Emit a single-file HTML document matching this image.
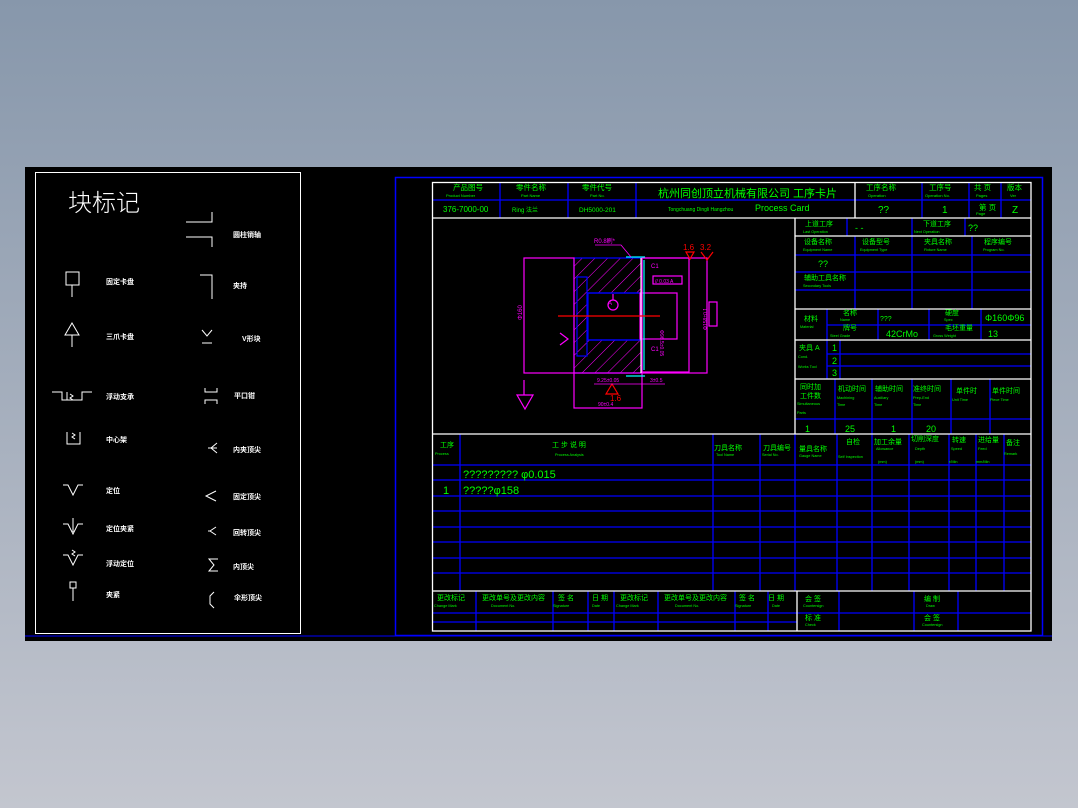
<!DOCTYPE html>
<html><head><meta charset="utf-8"><style>
html,body{margin:0;padding:0;width:1078px;height:808px;overflow:hidden}
svg{display:block}
text{font-family:"Liberation Sans","Noto Sans CJK SC",sans-serif}
</style></head><body>
<svg width="1078" height="808" viewBox="0 0 1078 808" xmlns="http://www.w3.org/2000/svg">
<defs>
<linearGradient id="bg" x1="0" y1="0" x2="0" y2="1">
<stop offset="0" stop-color="#8797ab"/><stop offset="1" stop-color="#c3c6cf"/>
</linearGradient>
<pattern id="hatch" width="9" height="9" patternUnits="userSpaceOnUse" patternTransform="rotate(45)">
<line x1="0" y1="0" x2="0" y2="9" stroke="#ff00ff" stroke-width="1"/>
</pattern>
</defs>
<rect width="1078" height="808" fill="url(#bg)"/>
<rect x="25" y="167" width="1027" height="474" fill="#000"/>

<!-- left panel -->
<rect x="35.5" y="172.5" width="265" height="461" fill="none" stroke="#fff" stroke-width="1"/>
<text x="68" y="211" fill="#fff" font-size="24" font-family="'Noto Sans CJK SC',sans-serif" font-weight="300">块标记</text>
<g stroke="#fff" stroke-width="1" fill="none">
<path d="M186 222h26v-10M186 237h26v10"/>
<path d="M200 275h12v24"/>
<rect x="66" y="272" width="13" height="13"/><path d="M72 285v12"/>
<path d="M72 323l-7 12h14z M72 335v12"/>
<path d="M52 392h10v8h20v-8h10 M67 392v8 M70 394l3 2-3 2 3 2"/>
<path d="M67 432v12h13v-12 M72 433l3 2-3 2 3 2"/>
<path d="M63 485h5l5 10 5-10h5"/>
<path d="M63 524h5l5 10 5-10h5 M73 518v14"/>
<path d="M63 555h5l5 10 5-10h5 M72 550l3 2-3 2 3 2"/>
<rect x="70" y="582" width="6" height="6"/><path d="M73 588v13"/>
<path d="M202 330l5 6 5-6 M202 343h10"/>
<path d="M205 388v4h12v-4 M205 404v-4h12v4"/>
<path d="M217 443l-6 5 6 5 M211 448h-3 M217 448h-6"/>
<path d="M216 491l-10 5 10 5"/>
<path d="M216 527l-6 4 6 4 M210 531h-2"/>
<path d="M218 559h-9l5 6-5 6h9"/>
<path d="M214 592l-4 4v8l4 4"/>
</g>
<g fill="#fff" font-size="7" font-weight="bold">
<text x="233" y="237">圆柱销轴</text><text x="233" y="288">夹持</text><text x="242" y="341">V形块</text>
<text x="234" y="398">平口钳</text><text x="233" y="452">内夹顶尖</text><text x="233" y="499">固定顶尖</text>
<text x="233" y="535">回转顶尖</text><text x="233" y="569">内顶尖</text><text x="234" y="600">伞形顶尖</text>
<text x="106" y="284">固定卡盘</text><text x="106" y="339">三爪卡盘</text><text x="106" y="399">浮动支承</text>
<text x="106" y="442">中心架</text><text x="106" y="493">定位</text><text x="106" y="531">定位夹紧</text>
<text x="106" y="566">浮动定位</text><text x="106" y="597">夹紧</text>
</g>

<!-- right frame -->
<rect x="395.5" y="177.5" width="647" height="458" fill="none" stroke="#0000ff" stroke-width="1.5"/>
<line x1="25" y1="636" x2="1052" y2="636" stroke="#0000ff" stroke-width="1"/>

<!-- blue grid lines -->
<g stroke="#0000ff" stroke-width="1.3">
<line x1="432" y1="200" x2="855" y2="200"/><line x1="855" y1="200" x2="1031" y2="200"/>
<line x1="500" y1="182" x2="500" y2="218"/><line x1="568" y1="182" x2="568" y2="218"/><line x1="636" y1="182" x2="636" y2="218"/>
<line x1="922" y1="182" x2="922" y2="218"/><line x1="969" y1="182" x2="969" y2="218"/><line x1="1001" y1="182" x2="1001" y2="218"/>
<line x1="847" y1="218" x2="847" y2="236"/><line x1="912" y1="218" x2="912" y2="236"/><line x1="965" y1="218" x2="965" y2="236"/>
<line x1="795" y1="255" x2="1031" y2="255"/><line x1="795" y1="272" x2="1031" y2="272"/><line x1="795" y1="290" x2="1031" y2="290"/>
<line x1="855" y1="236" x2="855" y2="309"/><line x1="912" y1="236" x2="912" y2="309"/><line x1="972" y1="236" x2="972" y2="309"/>
<line x1="827" y1="325" x2="1031" y2="325"/>
<line x1="827" y1="309" x2="827" y2="340"/><line x1="878" y1="309" x2="878" y2="340"/><line x1="929" y1="309" x2="929" y2="340"/><line x1="981" y1="309" x2="981" y2="340"/>
<line x1="827" y1="340" x2="827" y2="379"/><line x1="840" y1="340" x2="840" y2="379"/>
<line x1="827" y1="354" x2="1031" y2="354"/><line x1="827" y1="366" x2="1031" y2="366"/>
<line x1="795" y1="419" x2="1031" y2="419"/>
<line x1="835" y1="379" x2="835" y2="434"/><line x1="872" y1="379" x2="872" y2="434"/><line x1="912" y1="379" x2="912" y2="434"/><line x1="951" y1="379" x2="951" y2="434"/><line x1="990" y1="379" x2="990" y2="434"/>
<line x1="460" y1="434" x2="460" y2="591"/><line x1="713" y1="434" x2="713" y2="591"/><line x1="760" y1="434" x2="760" y2="591"/><line x1="795" y1="434" x2="795" y2="591"/>
<line x1="837" y1="434" x2="837" y2="591"/><line x1="872" y1="434" x2="872" y2="591"/><line x1="909" y1="434" x2="909" y2="591"/><line x1="949" y1="434" x2="949" y2="591"/><line x1="976" y1="434" x2="976" y2="591"/><line x1="1004" y1="434" x2="1004" y2="591"/>
<line x1="432" y1="465" x2="1031" y2="465"/><line x1="432" y1="480" x2="1031" y2="480"/><line x1="432" y1="496" x2="1031" y2="496"/>
<line x1="432" y1="511" x2="1031" y2="511"/><line x1="432" y1="527" x2="1031" y2="527"/><line x1="432" y1="542" x2="1031" y2="542"/>
<line x1="432" y1="558" x2="1031" y2="558"/><line x1="432" y1="573" x2="1031" y2="573"/>
<line x1="476" y1="591" x2="476" y2="631"/><line x1="553" y1="591" x2="553" y2="631"/><line x1="588" y1="591" x2="588" y2="631"/><line x1="614" y1="591" x2="614" y2="631"/>
<line x1="658" y1="591" x2="658" y2="631"/><line x1="735" y1="591" x2="735" y2="631"/><line x1="768" y1="591" x2="768" y2="631"/>
<line x1="839" y1="591" x2="839" y2="631"/><line x1="914" y1="591" x2="914" y2="631"/><line x1="958" y1="591" x2="958" y2="631"/>
<line x1="432" y1="613" x2="1031" y2="613"/><line x1="432" y1="622" x2="797" y2="622"/>
</g>
<!-- white lines -->
<g stroke="#fff" stroke-width="1.3" fill="none">
<rect x="432.5" y="182.5" width="598.5" height="448.5"/>
<line x1="855" y1="182" x2="855" y2="218"/>
<line x1="432" y1="218" x2="1031" y2="218"/>
<line x1="795" y1="218" x2="795" y2="434"/>
<line x1="795" y1="236" x2="1031" y2="236"/><line x1="795" y1="309" x2="1031" y2="309"/>
<line x1="795" y1="340" x2="1031" y2="340"/><line x1="795" y1="379" x2="1031" y2="379"/>
<line x1="432" y1="434" x2="1031" y2="434"/><line x1="432" y1="591" x2="1031" y2="591"/>
<line x1="797" y1="591" x2="797" y2="631"/>
</g>

<!-- text green -->
<g fill="#00ff00">
<g font-size="7.5">
<text x="453" y="190">产品图号</text><text x="516" y="190">零件名称</text><text x="582" y="190">零件代号</text>
<text x="866" y="190">工序名称</text><text x="929" y="190">工序号</text><text x="974" y="190">共 页</text><text x="1007" y="190">版本</text>
<text x="979" y="210">第 页</text>
</g>
<g font-size="4">
<text x="446" y="197">Product Number</text><text x="521" y="197">Part Name</text><text x="590" y="197">Part No.</text>
<text x="868" y="197">Operation</text><text x="925" y="197">Operation No.</text><text x="976" y="197">Pages</text><text x="1010" y="197">Ver</text>
<text x="976" y="215">Page</text>
</g>
<text x="443" y="212" font-size="8">376-7000-00</text>
<text x="512" y="212" font-size="6">Ring 法兰</text>
<text x="579" y="212" font-size="6.5">DH5000-201</text>
<text x="658" y="197" font-size="11">杭州同创顶立机械有限公司 工序卡片</text>
<text x="668" y="211" font-size="5">Tongchuang Dingli Hangzhou</text>
<text x="755" y="211" font-size="9">Process Card</text>
<text x="878" y="213" font-size="10">??</text><text x="942" y="213" font-size="10">1</text><text x="1012" y="213" font-size="10">Z</text>
<g font-size="7">
<text x="805" y="226">上道工序</text><text x="923" y="226">下道工序</text>
<text x="804" y="244">设备名称</text><text x="862" y="244">设备型号</text><text x="924" y="244">夹具名称</text><text x="984" y="244">程序编号</text>
<text x="804" y="280">辅助工具名称</text>
<text x="804" y="321">材料</text><text x="843" y="315">名称</text><text x="945" y="315">硬度</text><text x="843" y="330">牌号</text><text x="945" y="330">毛坯重量</text>
<text x="799" y="350">夹具 A</text>
<text x="800" y="389">同时加</text><text x="800" y="398">工件数</text>
<text x="838" y="391">机动时间</text><text x="875" y="391">辅助时间</text><text x="913" y="391">准终时间</text><text x="956" y="393">单件时</text><text x="992" y="393">单件时间</text>
<text x="440" y="447">工序</text><text x="552" y="447">工 步 说 明</text>
<text x="714" y="450">刀具名称</text><text x="763" y="450">刀具编号</text><text x="799" y="451">量具名称</text>
<text x="846" y="444">自检</text><text x="874" y="444">加工余量</text><text x="911" y="441">切削深度</text><text x="952" y="442">转速</text><text x="978" y="442">进给量</text><text x="1006" y="445">备注</text>
<text x="437" y="600">更改标记</text><text x="482" y="600">更改单号及更改内容</text><text x="558" y="600">签 名</text><text x="592" y="600">日 期</text>
<text x="620" y="600">更改标记</text><text x="664" y="600">更改单号及更改内容</text><text x="739" y="600">签 名</text><text x="768" y="600">日 期</text>
<text x="805" y="601">会 签</text><text x="805" y="620">标 准</text><text x="924" y="601">编 制</text><text x="924" y="620">会 签</text>
</g>
<g font-size="3.8">
<text x="803" y="233">Last Operation</text><text x="914" y="233">Next Operation</text>
<text x="803" y="251">Equipment Name</text><text x="860" y="251">Equipment Type</text><text x="924" y="251">Fixture Name</text><text x="983" y="251">Program No.</text>
<text x="803" y="287">Secondary Tools</text>
<text x="800" y="328">Material</text><text x="840" y="321">Name</text><text x="944" y="321">Spec</text><text x="830" y="337">Steel Grade</text><text x="933" y="337">Gross Weight</text>
<text x="798" y="358">Cond.</text><text x="798" y="368">Works Tool</text>
<text x="797" y="405">Simultaneous</text><text x="797" y="414">Parts</text>
<text x="837" y="399">Machining</text><text x="837" y="406">Time</text><text x="874" y="399">Auxiliary</text><text x="874" y="406">Time</text><text x="913" y="399">Prep-End</text><text x="913" y="406">Time</text>
<text x="952" y="401">Unit Time</text><text x="990" y="401">Piece Time</text>
<text x="435" y="455">Process</text><text x="555" y="456">Process Analysis</text>
<text x="716" y="456">Tool Name</text><text x="762" y="456">Serial No.</text><text x="799" y="457">Gauge Name</text>
<text x="838" y="458">Self Inspection</text><text x="876" y="450">Allowance</text><text x="878" y="463">(mm)</text><text x="915" y="450">Depth</text><text x="915" y="463">(mm)</text>
<text x="951" y="450">Speed</text><text x="949" y="463">r/Min</text><text x="978" y="450">Feed</text><text x="976" y="463">mm/Min</text><text x="1004" y="455">Remark</text>
<text x="434" y="607">Change Mark</text><text x="491" y="607">Document No.</text><text x="553" y="607">Signature</text><text x="592" y="607">Date</text>
<text x="616" y="607">Change Mark</text><text x="675" y="607">Document No.</text><text x="735" y="607">Signature</text><text x="772" y="607">Date</text>
<text x="803" y="607">Countersign</text><text x="805" y="626">Check</text><text x="926" y="607">Draw</text><text x="922" y="626">Countersign</text>
</g>
<g font-size="9">
<text x="855" y="231">- -</text><text x="968" y="231">??</text>
<text x="818" y="267">??</text>
<text x="880" y="321" font-size="7">???</text><text x="985" y="321">Φ160Φ96</text>
<text x="886" y="337">42CrMo</text><text x="988" y="337">13</text>
<text x="832" y="351">1</text><text x="832" y="364">2</text><text x="832" y="376">3</text>
<text x="805" y="432">1</text><text x="845" y="432">25</text><text x="891" y="432">1</text><text x="926" y="432">20</text>
</g>
<text x="463" y="478" font-size="11">????????? φ0.015</text>
<text x="443" y="494" font-size="11">1</text><text x="463" y="494" font-size="11">?????φ158</text>
</g>

<!-- drawing -->
<g fill="none" stroke-width="1.2">
<path d="M574 258h68v35h-54v47h54v33h-68z" fill="url(#hatch)" stroke="#0000ff"/>
<rect x="577" y="277" width="10" height="79" stroke="#0000ff"/>
<line x1="587" y1="293" x2="642" y2="293" stroke="#0000ff"/><line x1="587" y1="340" x2="642" y2="340" stroke="#0000ff"/>
<rect x="524" y="258" width="50" height="115" stroke="#ff00ff"/>
<rect x="640" y="293" width="37" height="46" stroke="#ff00ff"/>
<rect x="642" y="258" width="47" height="114" stroke="#ff00ff"/>
<rect x="642" y="258" width="65" height="115" stroke="#ff00ff"/>
<rect x="574" y="373" width="68" height="35" stroke="#ff00ff"/>
<line x1="641" y1="258" x2="641" y2="373" stroke="#fff"/>
<line x1="644" y1="260" x2="644" y2="370" stroke="#00ffff"/>
<line x1="626" y1="257" x2="645" y2="257" stroke="#00ffff"/>
<line x1="626" y1="376" x2="645" y2="376" stroke="#00ffff"/>
<line x1="558" y1="316" x2="660" y2="316" stroke="#ff0000"/>
<path d="M595 245h26l10 12" stroke="#ff00ff" stroke-width="0.8"/>
<rect x="653" y="276" width="29" height="8" stroke="#ff00ff"/>
<rect x="709" y="302" width="8" height="24" stroke="#ff00ff"/>
<circle cx="613" cy="305" r="5" stroke="#ff00ff"/><line x1="613" y1="294" x2="613" y2="300" stroke="#ff00ff"/>
<path d="M686 252l4 7 4-7z M701 252l6 8 6-8" stroke="#ff0000"/>
<path d="M606 394l6 -10 6 10z" stroke="#ff0000"/>
<line x1="594" y1="384" x2="665" y2="384" stroke="#ff00ff" stroke-width="0.8"/>
<path d="M517 395h16l-8 14z M524 380v15" stroke="#ff00ff"/>
<path d="M560 333l8 6-8 6" stroke="#ff00ff"/>
</g>
<g fill="#ff00ff" font-size="6">
<text x="594" y="243">R0.8刷*</text><text x="651" y="268">C1</text><text x="651" y="351">C1</text>
<text x="655" y="283" font-size="5">// 0.03 A</text>
<text x="597" y="382" font-size="5">9.25±0.05</text><text x="650" y="382" font-size="5">3±0.5</text>
<text x="598" y="406" font-size="5">90±0.4</text>
<text transform="translate(522 320) rotate(-90)">Φ160</text>
<text transform="translate(660 330) rotate(90)" font-size="5">Φ96.5±0.05</text>
<text transform="translate(707 330) rotate(-90)" font-size="5">Φ158±0.1</text>
<text x="608" y="305" font-size="6">A</text>
</g>
<g fill="#ff0000" font-size="8"><text x="683" y="250">1.6</text><text x="700" y="250">3.2</text><text x="610" y="401">1.6</text></g>
</svg>
</body></html>
